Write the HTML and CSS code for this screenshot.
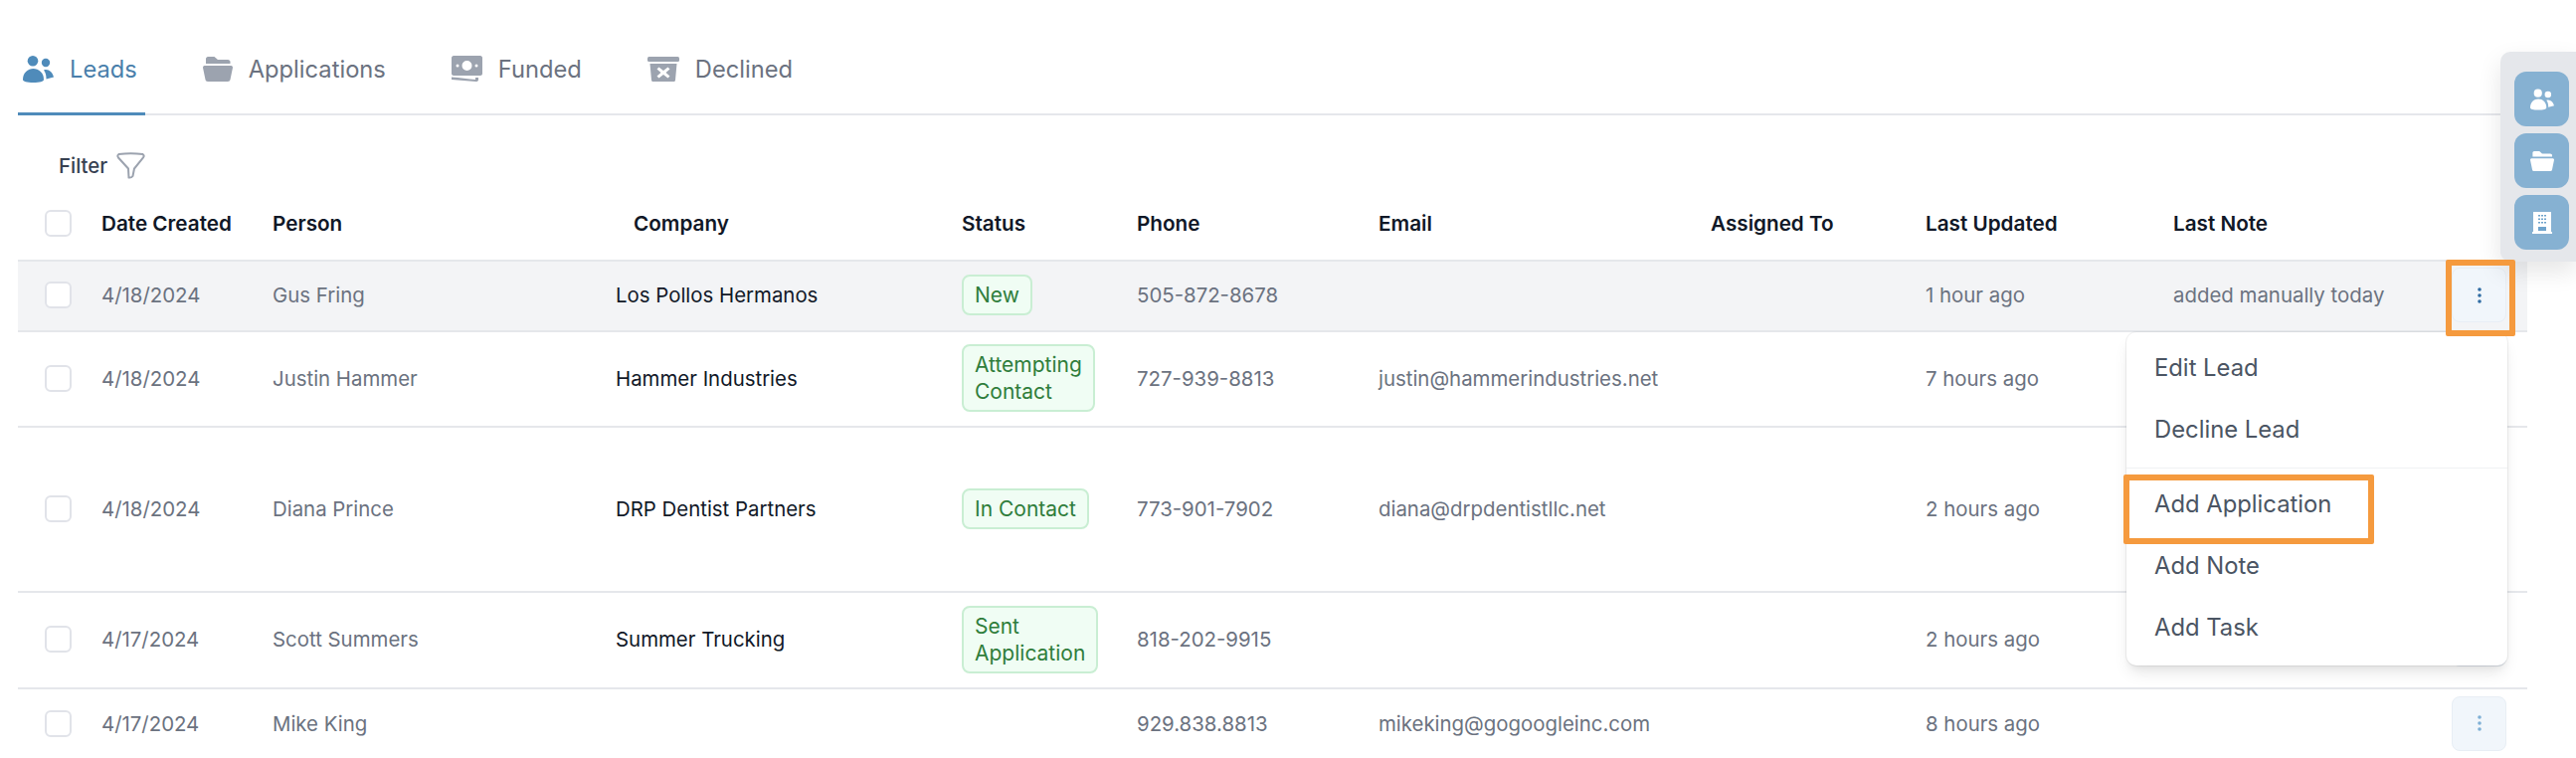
FILE: index.html
```html
<!DOCTYPE html>
<html lang="en">
<head>
  <meta charset="UTF-8">
  <meta name="viewport" content="width=device-width, initial-scale=1.0">
  <title>Leads</title>
  <link rel="stylesheet" href="styles.css">
</head>
<body>
  <div class="tabs">
    <div class="tab tab-active">
      <svg class="tab-icon" width="31" height="27" viewBox="0 0 31 27"><circle cx="10" cy="5.3" r="5.3"/><circle cx="23" cy="7" r="4.2"/><path d="M0 24C0 17 5 13 10.5 13S21 17 21 24C21 26 17 27 10.5 27S0 26 0 24Z"/><path d="M21 14.500C25.500 13 29.500 16 31 21.500L23.500 23.500C23.500 20 23 17 21 14.500Z"/></svg>
      Leads
    </div>
    <div class="tab">
      <svg class="tab-icon" width="30" height="25" viewBox="0 0 30 25"><path d="M5 0H11.500L15 3H25C26.500 3 27.500 4 27.500 5V7H3V2C3 1 4 0 5 0Z"/><path d="M1.500 9H28.500C29.500 9 30 10 30 11L27.500 23C27.300 24.200 26.300 25 25 25H5C3.700 25 2.700 24.200 2.500 23L0 11C0 10 .5 9 1.500 9Z"/></svg>
      Applications
    </div>
    <div class="tab">
      <svg class="tab-icon" width="31" height="26" viewBox="0 0 31 26"><path fill-rule="evenodd" d="M2 0H29C30 0 31 1 31 2V18C31 19 30 20 29 20H2C1 20 0 19 0 18V2C0 1 1 0 2 0ZM15.500 5A5 5 0 1 0 15.500 15 5 5 0 0 0 15.500 5ZM6 8.500A1.500 1.500 0 1 0 6 11.500 1.500 1.500 0 0 0 6 8.500ZM25 8.500A1.500 1.500 0 1 0 25 11.500 1.500 1.500 0 0 0 25 8.500Z"/><path d="M0 21.500C8 22 17 23.500 24 24V22H27V24C27 25.500 26 26 24.500 26C16 25.500 8 24.500 0 24Z"/></svg>
      Funded
    </div>
    <div class="tab">
      <svg class="tab-icon" width="32" height="25" viewBox="0 0 32 25"><rect width="32" height="5" rx="1.500"/><path fill-rule="evenodd" d="M2.500 7H29.500L28 23.500C28 24.500 27 25 26 25H6C5 25 4 24.500 4 23.500ZM11.500 10.500L9.500 12.500 13.500 16 9.500 19.500 11.500 21.500 16 18 20.500 21.500 22.500 19.500 18.500 16 22.500 12.500 20.500 10.500 16 14Z"/></svg>
      Declined
    </div>
  </div>

  <div class="filter">
    Filter
    <svg width="29" height="27" viewBox="0 0 29 27" fill="none" stroke="#9ca3af" stroke-width="2"><path d="M2.500 2Q14.500 .5 26.500 2Q28.500 3.500 27 5.500L18 16.500L16.500 24Q15 26 12.500 25.500L12 16.500L2 5.500Q.5 3.500 2.500 2Z"/></svg>
  </div>

  <div class="table-wrap">
    <table class="leads">
      <colgroup>
        <col class="col-check"><col class="col-date"><col class="col-person"><col class="col-company"><col class="col-status">
        <col class="col-phone"><col class="col-email"><col class="col-assigned"><col class="col-updated"><col class="col-note"><col class="col-action">
      </colgroup>
      <thead>
        <tr class="row-head">
          <th><span class="checkbox"></span></th>
          <th>Date Created</th>
          <th>Person</th>
          <th class="company-head">Company</th>
          <th>Status</th>
          <th>Phone</th>
          <th>Email</th>
          <th>Assigned To</th>
          <th>Last Updated</th>
          <th>Last Note</th>
          <th></th>
        </tr>
      </thead>
      <tbody>
        <tr class="row-one row-selected">
          <td><span class="checkbox"></span></td>
          <td>4/18/2024</td>
          <td>Gus Fring</td>
          <td class="company">Los Pollos Hermanos</td>
          <td><span class="badge">New</span></td>
          <td>505-872-8678</td>
          <td></td>
          <td></td>
          <td>1 hour ago</td>
          <td>added manually today</td>
          <td>
            <div class="more-wrap">
              <button class="more more-open"><svg width="4" height="16" viewBox="0 0 4 16"><circle cx="2" cy="2" r="1.800"/><circle cx="2" cy="8" r="1.800"/><circle cx="2" cy="14" r="1.800"/></svg></button>
              <div class="highlight highlight-more"></div>
            </div>
          </td>
        </tr>
        <tr class="row-two">
          <td><span class="checkbox"></span></td>
          <td>4/18/2024</td>
          <td>Justin Hammer</td>
          <td class="company">Hammer Industries</td>
          <td><span class="badge">Attempting<br>Contact</span></td>
          <td>727-939-8813</td>
          <td>justin@hammerindustries.net</td>
          <td></td>
          <td>7 hours ago</td>
          <td></td>
          <td><button class="more"><svg width="4" height="16" viewBox="0 0 4 16"><circle cx="2" cy="2" r="1.800"/><circle cx="2" cy="8" r="1.800"/><circle cx="2" cy="14" r="1.800"/></svg></button></td>
        </tr>
        <tr class="row-tall">
          <td><span class="checkbox"></span></td>
          <td>4/18/2024</td>
          <td>Diana Prince</td>
          <td class="company">DRP Dentist Partners</td>
          <td><span class="badge">In Contact</span></td>
          <td>773-901-7902</td>
          <td>diana@drpdentistllc.net</td>
          <td></td>
          <td>2 hours ago</td>
          <td></td>
          <td><button class="more"><svg width="4" height="16" viewBox="0 0 4 16"><circle cx="2" cy="2" r="1.800"/><circle cx="2" cy="8" r="1.800"/><circle cx="2" cy="14" r="1.800"/></svg></button></td>
        </tr>
        <tr class="row-four">
          <td><span class="checkbox"></span></td>
          <td>4/17/2024</td>
          <td>Scott Summers</td>
          <td class="company">Summer Trucking</td>
          <td><span class="badge">Sent<br>Application</span></td>
          <td>818-202-9915</td>
          <td></td>
          <td></td>
          <td>2 hours ago</td>
          <td></td>
          <td><button class="more"><svg width="4" height="16" viewBox="0 0 4 16"><circle cx="2" cy="2" r="1.800"/><circle cx="2" cy="8" r="1.800"/><circle cx="2" cy="14" r="1.800"/></svg></button></td>
        </tr>
        <tr class="row-five">
          <td><span class="checkbox"></span></td>
          <td>4/17/2024</td>
          <td>Mike King</td>
          <td class="company"></td>
          <td></td>
          <td>929.838.8813</td>
          <td>mikeking@gogoogleinc.com</td>
          <td></td>
          <td>8 hours ago</td>
          <td></td>
          <td><button class="more"><svg width="4" height="16" viewBox="0 0 4 16"><circle cx="2" cy="2" r="1.800"/><circle cx="2" cy="8" r="1.800"/><circle cx="2" cy="14" r="1.800"/></svg></button></td>
        </tr>
      </tbody>
    </table>

    <div class="menu">
      <div class="menu-group menu-group-first">
        <div class="menu-item">Edit Lead</div>
        <div class="menu-item">Decline Lead</div>
      </div>
      <div class="menu-group">
        <div class="menu-item">Add Application<div class="highlight highlight-item"></div></div>
        <div class="menu-item">Add Note</div>
        <div class="menu-item">Add Task</div>
      </div>
    </div>
  </div>

  <div class="dock">
    <div class="dock-btn">
      <svg width="24" height="22" viewBox="0 0 31 27" fill="#fff"><circle cx="10" cy="5.300" r="5.300"/><circle cx="23" cy="7" r="4.200"/><path d="M0 24C0 17 5 13 10.500 13S21 17 21 24C21 26 17 27 10.500 27S0 26 0 24Z"/><path d="M21 14.500C25.500 13 29.500 16 31 21.500L23.500 23.500C23.500 20 23 17 21 14.500Z"/></svg>
    </div>
    <div class="dock-btn">
      <svg width="24" height="20" viewBox="0 0 30 25" fill="#fff"><path d="M5 0H11.500L15 3H25C26.500 3 27.500 4 27.500 5V7H3V2C3 1 4 0 5 0Z"/><path d="M1.500 9H28.500C29.500 9 30 10 30 11L27.500 23C27.300 24.200 26.300 25 25 25H5C3.700 25 2.700 24.200 2.500 23L0 11C0 10 .5 9 1.500 9Z"/></svg>
    </div>
    <div class="dock-btn">
      <svg width="20" height="22" viewBox="0 0 20 22"><path fill="#fff" d="M1 0H19V20H20V22H0V20H1Z"/><path fill="#6ea3cc" d="M6 3h2v1.500H6zM9 3h2v1.500H9zM12 3h2v1.500h-2zM6 6.500h2V8H6zM9 6.500h2V8H9zM12 6.500h2V8h-2zM6 10h2v1.500H6zM9 10h2v1.500H9zM12 10h2v1.500h-2zM6 15h8v4H6z"/></svg>
    </div>
  </div>
</body>
</html>
```

FILE: styles.css
```css
body {
  font-family: Inter, "Liberation Sans", sans-serif;
  font-size: 20.4px;
  margin: 0;
  background: white;
  color: #6b7280;
  height: 762px;
  overflow: hidden;
  position: relative;
}
.tabs {
  display: flex;
  gap: 53px;
  margin: 0 49px 0 18px;
  padding-top: 51px;
  border-bottom: 2px solid #e5e7eb;
}
.tab {
  display: flex;
  align-items: center;
  gap: 16px;
  height: 36px;
  padding: 0 8px 26px 5px;
  font-size: 23.7px;
  color: #6b7280;
  fill: #9ca3af;
}
.tab-active {
  color: #4a7fab;
  fill: #4f8bba;
  border-bottom: 3px solid #4f8bba;
  margin-bottom: -2px;
}
.filter {
  display: flex;
  align-items: center;
  gap: 9px;
  height: 36px;
  padding: 32px 0 6px 59px;
  font-weight: 500;
  color: #374151;
}
.table-wrap {
  position: relative;
  margin-left: 18px;
  width: 2523px;
}
.leads {
  width: 100%;
  table-layout: fixed;
  border-collapse: separate;
  border-spacing: 0;
  font-size: 20.4px;
}
.col-check { width: 84px; }
.col-date { width: 172px; }
.col-person { width: 345px; }
.col-company { width: 348px; }
.col-status { width: 176px; }
.col-phone { width: 243px; }
.col-email { width: 334px; }
.col-assigned { width: 216px; }
.col-updated { width: 249px; }
.col-note { width: 274px; }
.col-action { width: 82px; }
.leads th,
.leads td {
  padding: 0;
  text-align: left;
  vertical-align: middle;
  border-bottom: 2px solid #e5e7eb;
}
.leads td { padding-bottom: 2px; }
.leads th {
  font-size: 20.7px;
  font-weight: 600;
  color: #111827;
  padding-bottom: 3px;
}
.row-head { height: 73px; }
.row-one { height: 71px; }
.row-two { height: 96px; }
.row-tall { height: 166px; }
.row-four { height: 97px; }
.row-five { height: 72px; }
.row-selected { background: #f3f4f6; }
.leads .company-head { padding-left: 18px; }
.company { color: #111827; }
.checkbox {
  display: block;
  width: 23px;
  height: 23px;
  margin-left: 27px;
  background: white;
  border: 2px solid #e1e3e9;
  border-radius: 6px;
}
.badge {
  display: inline-block;
  padding: 5px 11px;
  font-size: 21px;
  line-height: 27px;
  color: #2f7d3b;
  background: #f0fdf4;
  border: 2px solid #c9eed3;
  border-radius: 8px;
}
.more-wrap {
  position: relative;
  width: 55px;
  margin-left: 6px;
}
.more {
  display: flex;
  align-items: center;
  justify-content: center;
  width: 55px;
  height: 55px;
  margin-left: 6px;
  padding: 0;
  background: #f1f6fb;
  border: 1px solid #e8eef5;
  border-radius: 8px;
  fill: #7fb0d6;
}
.more-wrap .more { margin-left: 0; }
.more-open { fill: #2f6ca3; }
.highlight {
  position: absolute;
  z-index: 3;
  box-sizing: border-box;
  border: 6px solid #f59a3e;
  border-radius: 2px;
}
.highlight-more {
  top: -8px;
  left: -6px;
  width: 70px;
  height: 77px;
}
.highlight-item {
  top: 0;
  left: -3px;
  width: 252px;
  height: 70px;
}
.menu {
  position: absolute;
  z-index: 2;
  top: 144px;
  left: 2120px;
  width: 383px;
  background: white;
  border-radius: 10px;
  box-shadow: 0 10px 15px -3px rgba(0, 0, 0, 0.1), 0 4px 6px -2px rgba(0, 0, 0, 0.05), 0 0 0 1px rgba(0, 0, 0, 0.05);
  font-size: 23.8px;
  color: #4b5563;
}
.menu-group { padding: 6px 0; }
.menu-group-first { border-bottom: 1px solid #f0f1f3; }
.menu-item {
  position: relative;
  height: 62px;
  line-height: 60px;
  padding-left: 28px;
}
.dock {
  position: absolute;
  top: 52px;
  right: 0;
  width: 76px;
  height: 211px;
  box-sizing: border-box;
  padding: 20px 7px 0 14px;
  display: flex;
  flex-direction: column;
  gap: 7px;
  background: #e5e7eb;
  border-radius: 10px 0 0 10px;
  box-shadow: 0 10px 25px rgba(0, 0, 0, 0.1);
  z-index: 1;
}
.dock-btn {
  display: flex;
  align-items: center;
  justify-content: center;
  flex: none;
  width: 55px;
  height: 55px;
  background: #86b1d2;
  border-radius: 12px;
}
```
